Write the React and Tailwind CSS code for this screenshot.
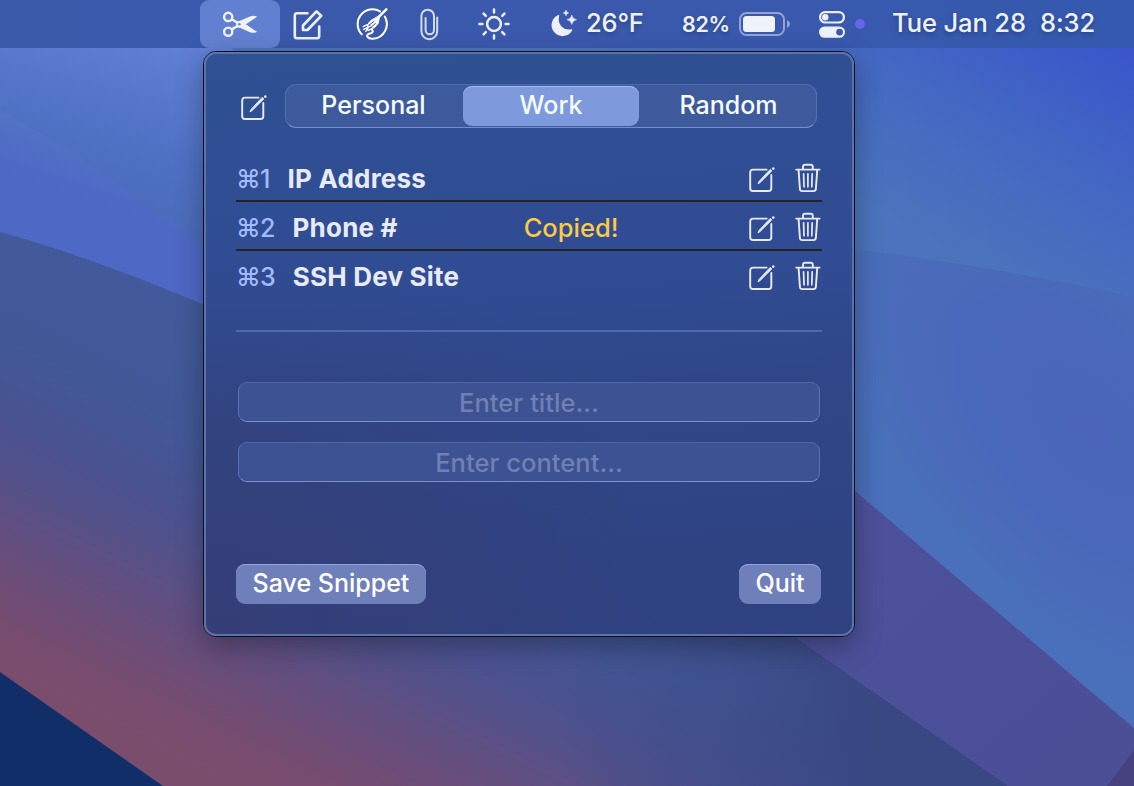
import React, { useState } from "react";

function Wallpaper() {
  return (
    <svg className="absolute inset-0 h-[786px] w-[1134px]" viewBox="0 0 1134 786" preserveAspectRatio="none" aria-hidden="true">
      <defs>
        <linearGradient id="sky" gradientUnits="userSpaceOnUse" x1="230" y1="30" x2="170" y2="270">
          <stop offset="0" stopColor="#6482da" />
          <stop offset="0.55" stopColor="#4f71c4" />
          <stop offset="1" stopColor="#4969b6" />
        </linearGradient>
        <linearGradient id="skyRight" gradientUnits="userSpaceOnUse" x1="1125" y1="40" x2="985" y2="275">
          <stop offset="0" stopColor="#3a55cb" />
          <stop offset="0.5" stopColor="#4467c3" />
          <stop offset="1" stopColor="#4b74bc" />
        </linearGradient>
        <linearGradient id="band" gradientUnits="userSpaceOnUse" x1="20" y1="110" x2="0" y2="170">
          <stop offset="0" stopColor="#5474c4" />
          <stop offset="1" stopColor="#4e68c6" />
        </linearGradient>
        <radialGradient id="mid" gradientUnits="userSpaceOnUse" cx="0" cy="0" r="1" gradientTransform="translate(1090 430) rotate(48) scale(330 185)">
          <stop offset="0" stopColor="#4a65b9" />
          <stop offset="0.5" stopColor="#4a68b9" />
          <stop offset="1" stopColor="#4a70bb" />
        </radialGradient>
        <linearGradient id="dusk" gradientUnits="userSpaceOnUse" x1="0" y1="215" x2="-180" y2="583">
          <stop offset="0" stopColor="#425a9b" />
          <stop offset="0.26" stopColor="#415897" />
          <stop offset="0.37" stopColor="#475493" />
          <stop offset="0.46" stopColor="#4b5290" />
          <stop offset="0.56" stopColor="#535189" />
          <stop offset="0.66" stopColor="#5f4f82" />
          <stop offset="0.78" stopColor="#6b4d78" />
          <stop offset="0.89" stopColor="#764c70" />
          <stop offset="1" stopColor="#7b4d6d" />
        </linearGradient>
        <linearGradient id="duskRight" gradientUnits="userSpaceOnUse" x1="560" y1="0" x2="880" y2="0">
          <stop offset="0" stopColor="#3c4a86" stopOpacity="0" />
          <stop offset="1" stopColor="#394783" stopOpacity="1" />
        </linearGradient>
        <linearGradient id="violet" gradientUnits="userSpaceOnUse" x1="850" y1="500" x2="1110" y2="786">
          <stop offset="0" stopColor="#4d519b" />
          <stop offset="1" stopColor="#4b4f96" />
        </linearGradient>
      </defs>
      <path fill="url(#sky)" d="M0 0H700V786H0z" />
      <path fill="url(#skyRight)" d="M226 44L270 80V786H1134V0H226z" />
      <path fill="url(#mid)" d="M600 230Q860 237 1134 297V786H600z" />
      <path fill="url(#band)" d="M0 110Q110 170 260 294V400H0z" />
      <path fill="url(#dusk)" d="M0 232Q110 262 260 329L1100 786H0z" />
      <path fill="url(#duskRight)" d="M260 329L1100 786H260z" />
      <path fill="url(#violet)" d="M700 362L855 491L1134 728V786H1008L796 638L600 500z" />
      <path fill="#46427f" d="M1134 750V786H1107z" />
      <path fill="#122e69" d="M0 672L163 786H0z" />
    </svg>
  );
}

function ScissorsIcon() {
  return (
    <svg className="h-[27px] w-9" viewBox="0 0 36 27" fill="none">
      <g stroke="#f0f2fa" strokeWidth="2.4">
        <circle cx="6.2" cy="5.9" r="4.1" />
        <circle cx="6.2" cy="20.7" r="4.1" />
        <path d="M9.7 8.2L16 12M9.7 18.4L16 14.7" />
      </g>
      <path fill="#f0f2fa" d="M14 10.5L18 9.7L28 5.4Q32 4.1 35 5.8L19 16.6L14.5 16.6z" />
      <path fill="#f0f2fa" d="M14 16L18 16.8L28 21.2Q32 22.6 35 20.8L19 10z" />
      <circle cx="17.4" cy="13.2" r="1.2" fill="#6480d0" />
    </svg>
  );
}

function MenuEditIcon() {
  return (
    <svg className="h-[31px] w-[31px]" viewBox="0 0 31 31" fill="none" stroke="#eef0f9" strokeWidth="2.6" strokeLinejoin="round" strokeLinecap="round">
      <path d="M14.5 4.3H4Q1.8 4.3 1.8 6.5V27Q1.8 29.2 4 29.2H24Q26.2 29.2 26.2 27V17.5" />
      <path d="M10 21V16.5L23.5 2.4L28.2 6.8L14.5 21z" />
    </svg>
  );
}

function ForkIcon() {
  return (
    <svg className="h-8 w-8" viewBox="0 0 32 32" fill="none" stroke="#fff" strokeLinecap="round" strokeLinejoin="round">
      <path strokeWidth="2" d="M5.8 26.4A14.8 14.8 0 0 1 24 3.4" />
      <path strokeWidth="2" d="M28.8 8.6A14.8 14.8 0 0 1 17 30.8C11.3 31.2 9.3 27 13.2 25.8C17.4 24.8 17.4 23 15.6 21.4" />
      <path strokeWidth="2.4" d="M30.3 1.3L22 9.6" />
      <path fill="#fff" strokeWidth=".8" d="M22.8 8.2L23.4 9.8L22.2 15.5L18.6 19.6L16 19L13.6 14.8L14.8 12.6z" />
      <path strokeWidth="1.4" d="M14.6 13.4L12.6 15.4M14 15.4L7.2 18.6M15.6 17.6L7.6 21.4M18.2 19.4L12.2 22.4M11.8 19.4V16.6M9.8 23.4L12 20" />
      <path stroke="#3a58ab" strokeWidth="1" d="M18 13.4L13.8 16.6M19.4 15.6L15.8 18.6" />
    </svg>
  );
}

function PaperclipIcon() {
  return (
    <svg className="h-[33px] w-[19px]" viewBox="0 0 19 33" fill="none" stroke="#d5dbee" strokeWidth="2" strokeLinecap="round">
      <path d="M17.2 9.5V23.3A7.9 7.9 0 0 1 1.4 23.3V8A6.3 6.3 0 0 1 14 8V22A3.8 3.8 0 0 1 5.6 22V10" />
    </svg>
  );
}

function SunIcon() {
  return (
    <svg className="h-8 w-8" viewBox="0 0 32 32" fill="none" stroke="#eef0f9" strokeWidth="2.5" strokeLinecap="round">
      <circle cx="16" cy="16" r="6.9" />
      <path d="M16 1.4V4.4M16 27.6V30.6M1.4 16H4.4M27.6 16H30.6M5.6 5.6L7.8 7.8M24.2 24.2L26.4 26.4M5.6 26.4L7.8 24.2M24.2 7.8L26.4 5.6" />
    </svg>
  );
}

function MoonIcon() {
  return (
    <svg className="h-7 w-[27px]" viewBox="0 0 27 28" fill="#eef0f9">
      <path d="M7.3 5Q8.5 4.6 8.2 6C6 14 12 20.8 20 19.3Q22 18.8 21 20.8A11 11 0 1 1 7.3 5z" />
      <path d="M20.8 5Q21.5 9 25.7 9.7Q21.5 10.4 20.8 14.4Q20.1 10.4 15.9 9.7Q20.1 9 20.8 5z" stroke="#eef0f9" strokeWidth=".5" />
      <path d="M15 0Q15.4 2.5 17.8 2.9Q15.4 3.3 15 5.8Q14.6 3.3 12.2 2.9Q14.6 2.5 15 0z" stroke="#eef0f9" strokeWidth=".4" />
    </svg>
  );
}

function BatteryIcon() {
  return (
    <svg className="h-6 w-[51px]" viewBox="0 0 51 24" fill="none">
      <rect x="1" y="1" width="44" height="22" rx="6.5" stroke="#94a3d2" strokeWidth="2" />
      <rect x="4" y="4" width="32" height="16" rx="3.5" fill="#f0f2fa" />
      <path d="M48 8Q51 9.5 51 12Q51 14.5 48 16z" fill="#94a3d2" />
    </svg>
  );
}

function ControlCenterIcon() {
  return (
    <svg className="h-[27px] w-[26px]" viewBox="0 0 26 27" fill="none">
      <rect x="1.1" y="1.1" width="23.8" height="10.4" rx="5.2" stroke="#eef0f9" strokeWidth="2.2" />
      <circle cx="6.3" cy="6.3" r="3.2" fill="#eef0f9" />
      <rect x="0" y="15.4" width="26" height="11.4" rx="5.7" fill="#eef0f9" />
      <circle cx="20.6" cy="21.1" r="3.4" fill="#3a58ab" />
    </svg>
  );
}

function ComposeIcon() {
  return (
    <svg className="h-[26px] w-[26px]" viewBox="0 0 26 26" fill="none" stroke="#e9ecf7" strokeLinecap="round" strokeLinejoin="round">
      <path strokeWidth="1.9" d="M17.6 2.6H4Q1.2 2.6 1.2 5.4V21.2Q1.2 24 4 24H19.5Q22.3 24 22.3 21.2V8" />
      <path fill="#e9ecf7" strokeWidth="1" d="M21.5 2.6L22.8 3.9L11 15.6L9 16.9L10.1 14.5z" />
      <path strokeWidth="2.5" d="M24.2 1.6L24.3 1.5" />
    </svg>
  );
}

function TrashIcon() {
  return (
    <svg className="h-[30px] w-[26px]" viewBox="0 0 26 30" fill="none" stroke="#e9ecf7" strokeWidth="1.9" strokeLinecap="round" strokeLinejoin="round">
      <path d="M1.2 6.6H24.6M8 6.3V3.8Q8 1.7 10 1.7H15.8Q17.8 1.7 17.8 3.8V6.3" />
      <path d="M3.6 7L4.9 25.7Q5.1 28.1 7.4 28.1H18.4Q20.7 28.1 20.9 25.7L22.2 7" />
      <path strokeWidth="1.7" d="M8.6 10.8L9 23.8M12.9 10.8V23.8M17.2 10.8L16.8 23.8" />
    </svg>
  );
}

function MenuBar() {
  return (
    <header className="relative flex h-12 items-center bg-gradient-to-r from-[#3a59a9] via-[#3b59ad] to-[#3459ae] pl-[200px] text-[#eff1fa] [text-shadow:0_2px_4px_rgba(0,0,0,0.25)]">
      <div className="flex h-12 w-20 items-center justify-center rounded-[9px] bg-[#6280d0]">
        <ScissorsIcon />
      </div>
      <div className="ml-[13px]"><MenuEditIcon /></div>
      <div className="ml-8"><ForkIcon /></div>
      <div className="ml-8"><PaperclipIcon /></div>
      <div className="ml-[39px]"><SunIcon /></div>
      <div className="ml-[41px]"><MoonIcon /></div>
      <div className="ml-2 w-[60px] pb-0.5 text-[25.5px] leading-[46px] font-medium tracking-[-0.2px] whitespace-nowrap">26°F</div>
      <div className="ml-9 w-[57px] text-[21.5px] leading-[48px] font-semibold tracking-[-0.3px] whitespace-nowrap">82%</div>
      <BatteryIcon />
      <div className="ml-[29px]"><ControlCenterIcon /></div>
      <div className="ml-2.5 size-2.5 rounded-full bg-[#6565e8]" />
      <div className="ml-[27px] flex justify-between pb-0.5 text-[25.5px] leading-[46px] font-medium tracking-[-0.1px] whitespace-nowrap">
        <span className="w-[148px]">Tue Jan 28</span>
        <span>8:32</span>
      </div>
    </header>
  );
}

const tabs = [
  { name: "Personal", nudge: "pr-[3px]" },
  { name: "Work", nudge: "" },
  { name: "Random", nudge: "pl-[3px]" },
];

const snippets = [
  { key: "1", title: "IP Address" },
  { key: "2", title: "Phone #", copied: true },
  { key: "3", title: "SSH Dev Site" },
];

function SnippetRow({ item, last }) {
  return (
    <li className={"flex h-[49px] items-center border-b-2 pt-0.5 " + (last ? "border-transparent" : "border-[#222325]")}>
      <span className="pt-[3px] text-[25px] leading-none font-medium tracking-[-0.8px] text-[#a2bbff]">⌘{item.key}</span>
      <span className="ml-[18px] pt-[3px] text-[26px] leading-none font-bold tracking-[0.2px] whitespace-nowrap text-[#e8ebf6]">{item.title}</span>
      <span className="flex-1 pt-[3px] pl-[126px] text-[25.5px] leading-none font-medium text-[#fcca44]">{item.copied ? "Copied!" : ""}</span>
      <button className="mt-1" aria-label="Edit"><ComposeIcon /></button>
      <button className="mr-[1.5px] ml-5" aria-label="Delete"><TrashIcon /></button>
    </li>
  );
}

const fieldClass =
  "h-10 w-full rounded-[9px] border border-t-[#5066a5] border-r-[#5a70b0] border-b-[#7b91cf] border-l-[#5a70b0] bg-[#3d5293] text-center text-[25.5px] font-[450] tracking-[0.05px] text-white outline-none placeholder:text-[#7080b2]";

const buttonClass =
  "h-10 rounded-[9px] bg-[#6f7fb9] text-[25px] font-medium whitespace-nowrap text-white shadow-[inset_0_1px_0_#93a3e0]";

function Popover() {
  const [active, setActive] = useState("Work");
  return (
    <main className="relative mt-[3px] ml-[203px] h-[586px] w-[652px] rounded-[13px] border border-[#0c101c] shadow-[0_10px_28px_rgba(0,0,0,0.3)]">
      <div className="flex h-full w-full flex-col rounded-[12px] border-2 border-[#5e72aa] bg-[radial-gradient(ellipse_at_0%_100%,rgba(57,58,110,0.6)_0%,rgba(50,60,120,0)_50%),linear-gradient(175deg,#2f5093_0%,#304c94_40%,#2f4788_58%,#2f4180_100%)] px-[30px]">
        <div className="mt-[30px] flex h-11 items-center">
          <button className="mt-[3px] ml-[4.5px]" aria-label="New snippet"><ComposeIcon /></button>
          <div className="ml-[18.5px] flex h-11 w-[532px] rounded-[11px] border border-t-[#4e69af] border-r-[#536fb2] border-b-[#7190cf] border-l-[#536fb2] bg-[#3d5a9c] p-[1px]">
            {tabs.map((tab) => (
              <button
                key={tab.name}
                onClick={() => setActive(tab.name)}
                className={
                  "h-10 w-44 text-[25px] font-medium text-[#f6fbff] " +
                  tab.nudge +
                  (active === tab.name ? " rounded-[9px] bg-[#7c9adc] shadow-[inset_0_1px_0_#a0bcf5]" : "")
                }
              >
                {tab.name}
              </button>
            ))}
          </div>
        </div>
        <ul className="mt-[25px]">
          {snippets.map((item, i) => (
            <SnippetRow key={item.key} item={item} last={i === snippets.length - 1} />
          ))}
        </ul>
        <hr className="mt-[30px] border-t-2 border-[#4f69ad]" />
        <div className="mt-[50px] flex flex-col gap-5 px-0.5">
          <input className={fieldClass} placeholder="Enter title..." />
          <input className={fieldClass} placeholder="Enter content..." />
        </div>
        <div className="mt-[82px] flex justify-between pr-[1px]">
          <button className={buttonClass + " w-[190px] pb-px"}>Save Snippet</button>
          <button className={buttonClass + " w-[82px] pb-px"}>Quit</button>
        </div>
      </div>
    </main>
  );
}

export default function App() {
  return (
    <div className="relative h-[786px] w-[1134px] overflow-hidden font-[Inter,'Liberation_Sans',sans-serif]">
      <Wallpaper />
      <MenuBar />
      <Popover />
    </div>
  );
}
